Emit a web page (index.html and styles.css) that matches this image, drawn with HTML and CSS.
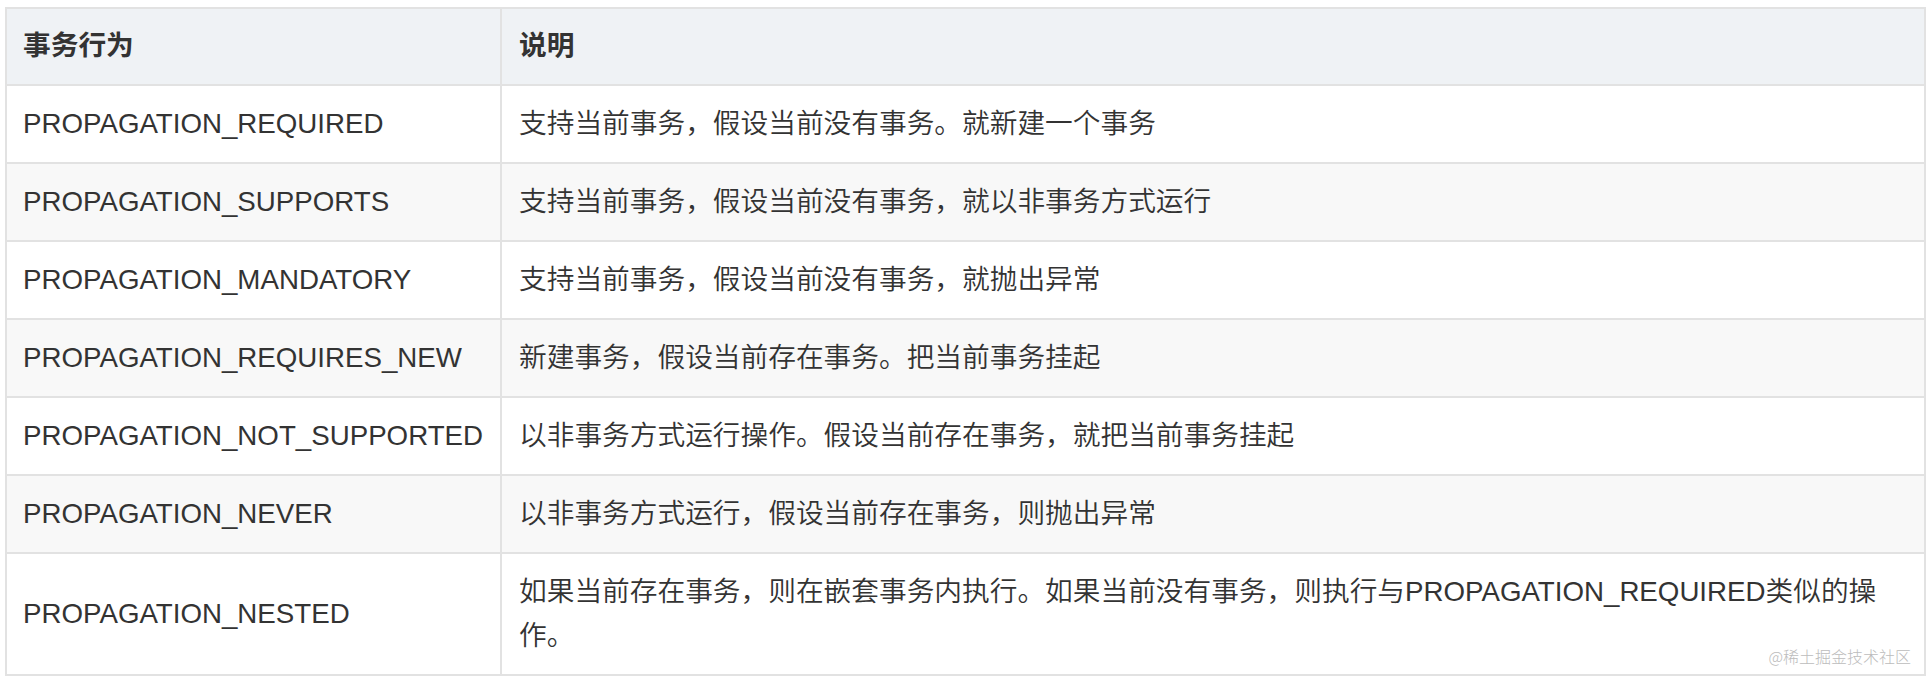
FILE: index.html
```html
<!DOCTYPE html>
<html lang="zh-CN">
<head>
<meta charset="utf-8">
<title>事务传播行为</title>
<link rel="stylesheet" href="styles.css">
</head>
<body>
<div class="page">
  <table class="tx-table">
    <thead>
      <tr><th class="col-name">事务行为</th><th>说明</th></tr>
    </thead>
    <tbody>
      <tr><td class="col-name">PROPAGATION_REQUIRED</td><td>支持当前事务，假设当前没有事务。就新建一个事务</td></tr>
      <tr><td class="col-name">PROPAGATION_SUPPORTS</td><td>支持当前事务，假设当前没有事务，就以非事务方式运行</td></tr>
      <tr><td class="col-name">PROPAGATION_MANDATORY</td><td>支持当前事务，假设当前没有事务，就抛出异常</td></tr>
      <tr><td class="col-name">PROPAGATION_REQUIRES_NEW</td><td>新建事务，假设当前存在事务。把当前事务挂起</td></tr>
      <tr><td class="col-name">PROPAGATION_NOT_SUPPORTED</td><td>以非事务方式运行操作。假设当前存在事务，就把当前事务挂起</td></tr>
      <tr><td class="col-name">PROPAGATION_NEVER</td><td>以非事务方式运行，假设当前存在事务，则抛出异常</td></tr>
      <tr><td class="col-name">PROPAGATION_NESTED</td><td>如果当前存在事务，则在嵌套事务内执行。如果当前没有事务，则执行与PROPAGATION_REQUIRED类似的操作。</td></tr>
    </tbody>
  </table>
  <div class="watermark">@稀土掘金技术社区</div>
</div>
</body>
</html>
```

FILE: styles.css
```css
html, body {
  margin: 0;
  padding: 0;
  background: #ffffff;
}

.page {
  position: relative;
  padding: 7px 6px 0 5px;
  height: 679px;
}

.tx-table {
  width: 100%;
  border-collapse: separate;
  border-spacing: 0;
  border-top: 2px solid #e2e2e2;
  border-left: 2px solid #e2e2e2;
  font-family: "Liberation Sans", "Noto Sans CJK SC", sans-serif;
  font-size: 27.7px;
  line-height: 44px;
  color: #333333;
}

.tx-table th,
.tx-table td {
  text-align: left;
  vertical-align: middle;
  border-right: 2px solid #e2e2e2;
  border-bottom: 2px solid #e2e2e2;
  padding: 16px 17px;
}

.tx-table td {
  font-weight: 350;
}

.tx-table th {
  background: #eff2f5;
  font-weight: 700;
  color: #333333;
  padding-top: 15px;
  padding-bottom: 16px;
}

.tx-table .col-name {
  white-space: nowrap;
  padding-left: 16px;
}

.tx-table tbody tr:nth-child(2n) td {
  background: #f8f8f8;
}

.watermark {
  position: absolute;
  right: 21px;
  bottom: 20px;
  font-family: "Noto Sans CJK SC", sans-serif;
  font-size: 16px;
  line-height: 20px;
  font-weight: 300;
  color: #bcbcbc;
}
```
